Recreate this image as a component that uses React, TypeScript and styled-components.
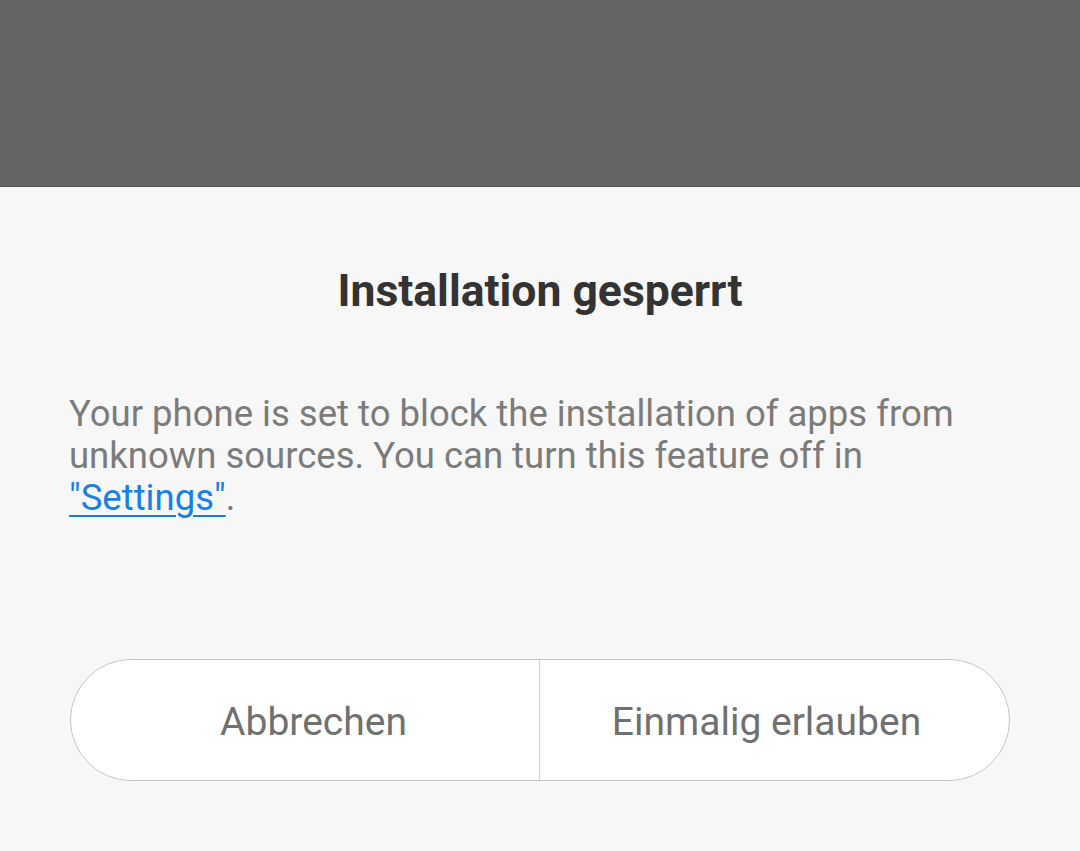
import React from "react";
import styled, { createGlobalStyle } from "styled-components";

const Global = createGlobalStyle`
  html, body { margin: 0; padding: 0; background: #f7f7f7; }
  body { font-family: Roboto, "Noto Sans", sans-serif; }
`;

const Page = styled.div`
  width: 1080px;
  height: 851px;
  display: flex;
  flex-direction: column;
  overflow: hidden;
`;

const Scrim = styled.div`
  height: 186px;
  flex: none;
  background: #646464;
  border-bottom: 1px solid #4e4e4e;
`;

const Dialog = styled.div`
  flex: 1;
  background: #f7f7f7;
  display: flex;
  flex-direction: column;
  padding: 0 70px;
`;

const Title = styled.h1`
  margin: 74px 0 0;
  font-size: 44.5px;
  line-height: 60px;
  font-weight: 700;
  color: #333333;
  text-align: center;
`;

const Message = styled.p`
  margin: 72px 0 0 -1px;
  padding: 0;
  font-size: 36.5px;
  line-height: 42px;
  color: #7b7b7b;
`;

const Link = styled.a`
  color: #1a7ee8;
  text-decoration: underline;
  text-underline-offset: 5px;
  text-decoration-thickness: 2px;
`;

const ButtonRow = styled.div`
  margin-top: 140px;
  height: 120px;
  display: flex;
  border: 1px solid #c6c6c6;
  border-radius: 61px;
  background: #ffffff;
  overflow: hidden;
`;

const Button = styled.button<{ $side: "left" | "right" }>`
  flex: 1;
  border: none;
  background: transparent;
  font-family: Roboto, "Noto Sans", sans-serif;
  font-size: 39px;
  color: #707070;
  padding: ${(p) => (p.$side === "left" ? "3px 0 0 16px" : "3px 16px 0 0")};
  border-left: ${(p) => (p.$side === "right" ? "1px solid #d0d0d0" : "none")};
  margin-left: ${(p) => (p.$side === "right" ? "-1px" : "0")};
`;

export default function App() {
  return (
    <Page>
      <Global />
      <Scrim />
      <Dialog>
        <Title>Installation gesperrt</Title>
        <Message>
          Your phone is set to block the installation of apps from unknown
          sources. You can turn this feature off in{" "}
          <Link href="#">"Settings"</Link>.
        </Message>
        <ButtonRow>
          <Button $side="left">Abbrechen</Button>
          <Button $side="right">Einmalig erlauben</Button>
        </ButtonRow>
      </Dialog>
    </Page>
  );
}
